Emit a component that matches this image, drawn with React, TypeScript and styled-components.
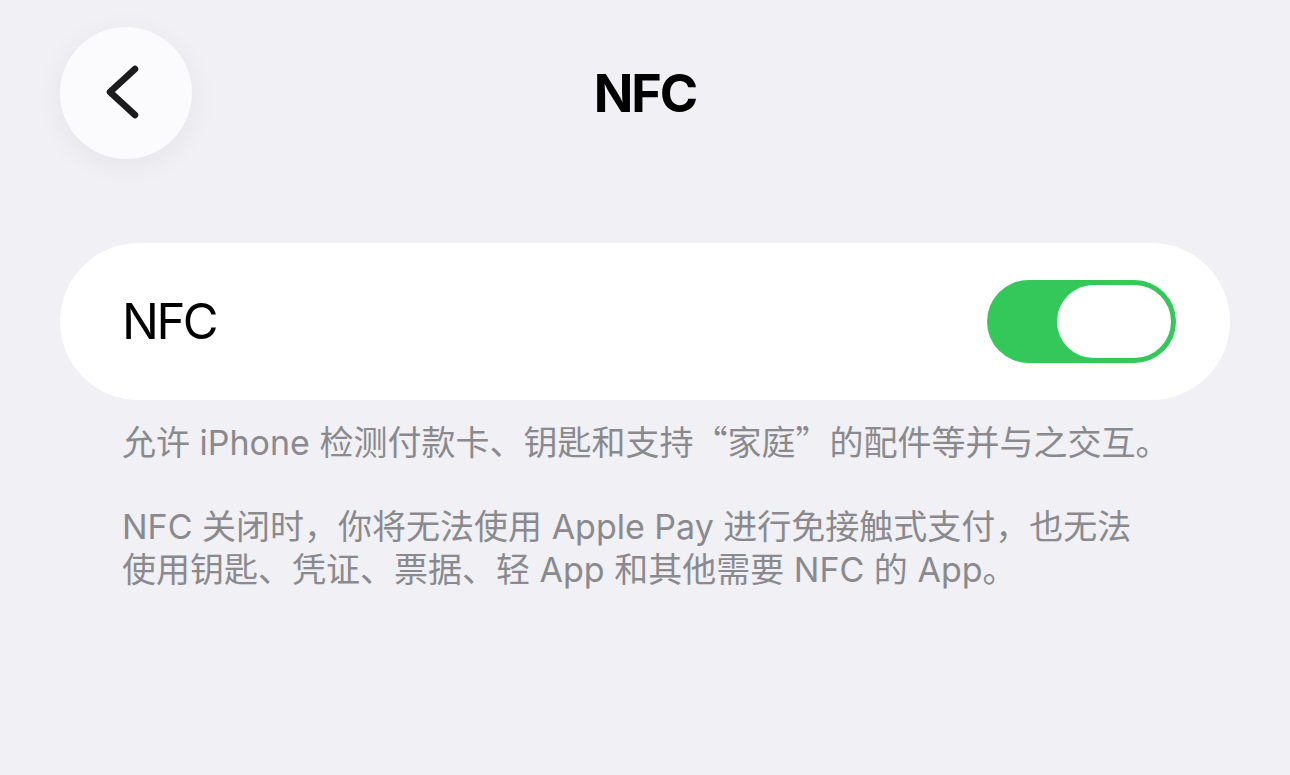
import React from "react"
import styled, { createGlobalStyle } from "styled-components"

const GlobalStyle = createGlobalStyle`
  html, body {
    margin: 0;
    padding: 0;
    background: #f0f0f5;
  }
  body {
    font-family: Inter, "Noto Sans CJK SC", sans-serif;
    -webkit-font-smoothing: antialiased;
  }
`

const Page = styled.div`
  width: 1290px;
  height: 775px;
  box-sizing: border-box;
  padding: 27px 60px 0 60px;
  background: #f0f0f5;
  display: flex;
  flex-direction: column;
`

const Header = styled.div`
  display: grid;
  grid-template-columns: 132px 1fr 132px;
  align-items: center;
  height: 132px;
`

const BackButton = styled.button`
  width: 132px;
  height: 132px;
  border-radius: 50%;
  border: none;
  padding: 0;
  background: #fbfbfd;
  box-shadow: 0 6px 30px rgba(0, 0, 0, 0.05);
  display: flex;
  align-items: center;
  justify-content: center;
`

const Title = styled.h1`
  margin: 0;
  text-align: center;
  font-size: 52px;
  font-weight: 700;
  color: #000;
  letter-spacing: -2px;
`

const Card = styled.div`
  margin-top: 84px;
  height: 157px;
  border-radius: 79px;
  background: #fff;
  display: flex;
  align-items: center;
  justify-content: space-between;
  padding: 0 54px 0 62px;
`

const Label = styled.span`
  font-size: 49px;
  font-weight: 400;
  color: #000;
  letter-spacing: -2.5px;
`

const Toggle = styled.div<{ $on: boolean }>`
  width: 189px;
  height: 83px;
  border-radius: 42px;
  background: ${({ $on }) => ($on ? "#34c759" : "#e9e9ea")};
  box-sizing: border-box;
  padding: 5px;
  display: flex;
  justify-content: ${({ $on }) => ($on ? "flex-end" : "flex-start")};
`

const Knob = styled.div`
  width: 114px;
  height: 73px;
  border-radius: 37px;
  background: #fff;
`

const Footer = styled.div`
  padding: 19px 0 0 62px;
  color: #8a8a8e;
  font-size: 34px;
  line-height: 43px;
  white-space: nowrap;
`

const Note = styled.p`
  margin: 0 0 41px 0;
`

// full-width CJK punctuation (quotes)
const Cjk = styled.span`
  font-family: "Noto Sans CJK SC", sans-serif;
`

export default function App() {
  return (
    <Page>
      <GlobalStyle />
      <Header>
        <BackButton aria-label="返回">
          <svg width="40" height="58" viewBox="0 0 40 58">
            <polyline
              points="29,5 4,28 29,51"
              fill="none"
              stroke="#1c1c1e"
              strokeWidth="6.5"
              strokeLinecap="round"
              strokeLinejoin="round"
            />
          </svg>
        </BackButton>
        <Title>NFC</Title>
        <div />
      </Header>
      <Card>
        <Label>NFC</Label>
        <Toggle $on>
          <Knob />
        </Toggle>
      </Card>
      <Footer>
        <Note>
          允许 iPhone 检测付款卡、钥匙和支持<Cjk>“</Cjk>家庭<Cjk>”</Cjk>的配件等并与之交互。
        </Note>
        <Note>
          NFC 关闭时，你将无法使用 Apple Pay 进行免接触式支付，也无法
          <br />
          使用钥匙、凭证、票据、轻 App 和其他需要 NFC 的 App。
        </Note>
      </Footer>
    </Page>
  )
}
